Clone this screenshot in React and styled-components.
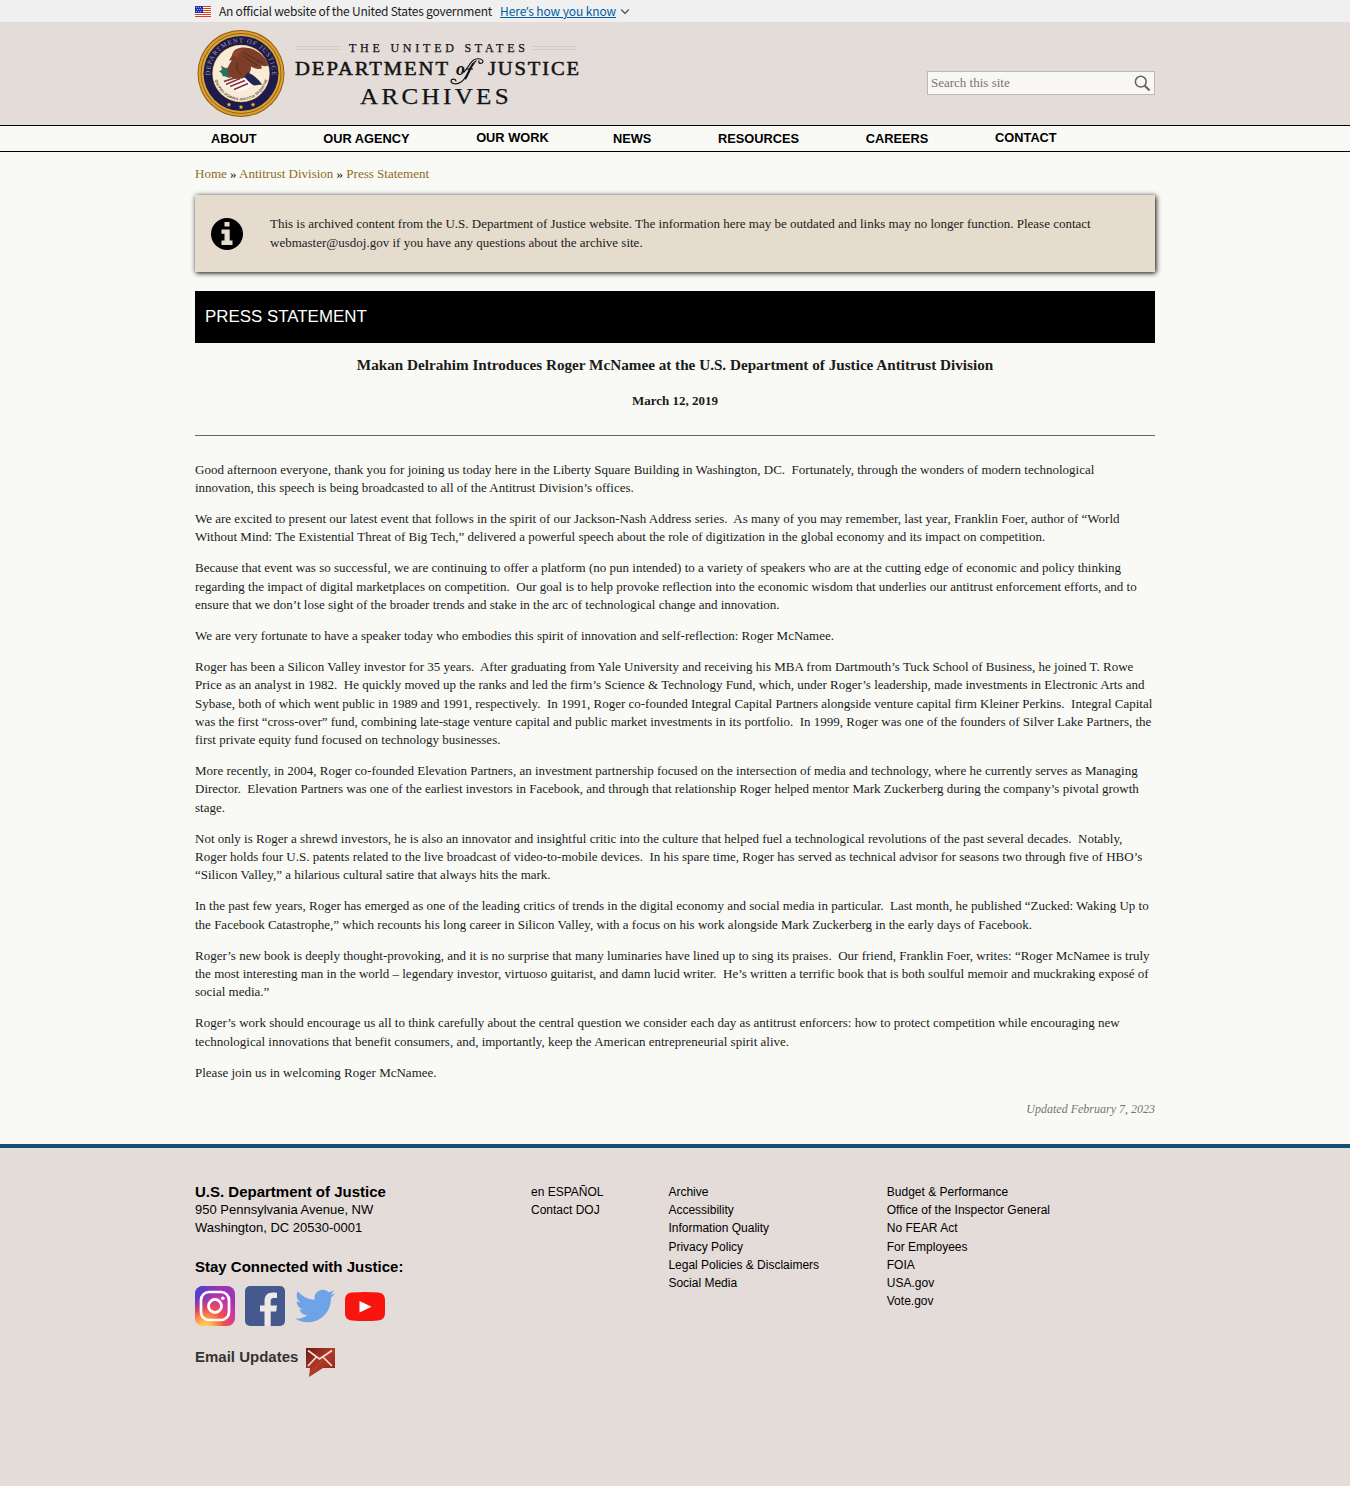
import React from "react";
import styled, { createGlobalStyle } from "styled-components";
import { FaTwitter } from "react-icons/fa";

const sans = `"Liberation Sans", Arial, sans-serif`;
const serif = `"Liberation Serif", "Times New Roman", serif`;

const GlobalStyle = createGlobalStyle`
  *, *::before, *::after { box-sizing: border-box; }
  body {
    margin: 0;
    background: #f9faf5;
    color: #1b1b1b;
    font: 13px/18.2px ${serif};
  }
  a { color: inherit; text-decoration: none; }
  p { margin: 0; }
  svg { flex: none; }
`;

const Container = styled.div`
  width: 960px;
  margin: 0 auto;
`;

const Banner = styled.div`
  height: 22px;
  background: #f0f0f0;
`;

const BannerInner = styled(Container)`
  display: flex;
  align-items: center;
  height: 22px;
  font: 12px/22px "Noto Sans CJK SC", sans-serif;
  letter-spacing: -0.23px;
  color: #1b1b1b;
  white-space: nowrap;

  > svg:first-child { margin-right: 8px; }
`;

const BannerLink = styled.a`
  margin: 0 4px 0 8px;
  color: #005ea2;
  letter-spacing: -0.1px;
  text-decoration: underline;
`;

const Apostrophe = styled.span`
  font-family: "Open Sans", sans-serif;
  line-height: 1;
`;

const Masthead = styled.header`
  height: 103px;
  background: #e3dcd9;
`;

const MastheadInner = styled(Container)`
  display: flex;
  justify-content: space-between;
`;

const SearchBox = styled.div`
  display: flex;
  align-items: center;
  justify-content: space-between;
  width: 228px;
  height: 24px;
  margin-top: 49px;
  padding: 0 3px;
  border: 1px solid #bdb8b4;
  background: #f9f7f4;
  color: #757575;
`;

const Nav = styled.nav`
  height: 27px;
  border-top: 1px solid #000;
  border-bottom: 1px solid #000;
`;

const NavInner = styled(Container)`
  display: flex;
  gap: 66.7px;
  padding-left: 16px;
`;

const NavItem = styled.a`
  margin-right: ${(p) => p.$pull || 0};
  font: bold 12.8px/${(p) => (p.$raised ? "23px" : "25px")} ${sans};
  color: #000;
`;

const Breadcrumb = styled.div`
  padding-top: 13px;
  margin-bottom: 12px;
  color: #000;

  a { color: #8c6a24; }
`;

const Notice = styled.div`
  display: flex;
  align-items: center;
  height: 77px;
  padding: 0 60px 0 16px;
  background: #e5dccd;
  box-shadow: 1px 1px 5px #000;
`;

const NoticeText = styled.p`
  margin: 0 0 2px 27px;
  line-height: 19px;
`;

const SectionBar = styled.h2`
  height: 52px;
  margin: 19px 0 0;
  padding-left: 10px;
  background: #000;
  color: #fff;
  font: 16.9px/51px ${sans};
`;

const Title = styled.h1`
  margin: 12px 0 0;
  font-size: 15.2px;
  line-height: 19.5px;
  text-align: center;
`;

const DateLine = styled.div`
  margin-top: 17.5px;
  padding-bottom: 25px;
  border-bottom: 1px solid #666;
  font-weight: bold;
  text-align: center;
`;

const Article = styled.article`
  padding-top: 24.16px;

  p { margin-bottom: 13px; }
`;

const Updated = styled.div`
  margin-top: 18.1px;
  font-size: 12px;
  font-style: italic;
  color: #757575;
  text-align: right;
`;

const Footer = styled.footer`
  height: 342.4px;
  margin-top: 25.7px;
  padding-top: 35px;
  border-top: 4px solid #164e73;
  background: #e3dcd9;
  font-family: ${sans};
  color: #000;
`;

const FooterInner = styled(Container)`
  display: flex;
`;

const FooterColumn = styled.div`
  width: ${(p) => p.$width};
`;

const FooterLink = styled.a`
  display: block;
  font-size: 12px;
  white-space: nowrap;
`;

const FooterHeading = styled.div`
  font-size: 15px;
  font-weight: bold;
`;

const StayHeading = styled(FooterHeading)`
  margin: 20.6px 0 9.4px;
`;

const SocialRow = styled.div`
  display: flex;
  gap: 10px;
`;

const EmailRow = styled.div`
  display: flex;
  gap: 7px;
  margin-top: 22px;
  color: #333;
  font: bold 15px/18px ${sans};
`;

const stripes = [0, 2, 4, 6, 8, 10];

const Flag = () => (
  <svg width="16" height="11" viewBox="0 0 16 11">
    <rect width="16" height="11" fill="#fff" />
    {stripes.map((y) => <rect key={y} y={y} width="16" height="1" fill="#db3e1f" />)}
    <rect width="8" height="7" fill="#1e33b1" />
    {[1, 3, 5].map((y) => [1, 3, 5].map((x) => (
      <rect key={`${x}-${y}`} x={x + (y === 3 ? 1 : 0)} y={y} width="1" height="1" fill="#a5add8" />
    )))}
  </svg>
);

const Chevron = () => (
  <svg width="10" height="8" viewBox="0 0 10 8" fill="none" stroke="#565c65" strokeWidth="1.4">
    <path d="M1.2 2.5 5 6.5 8.8 2.5" />
  </svg>
);

const Seal = () => (
  <g transform="translate(241 73.5)">
    <defs>
      <path id="sealTop" d="M-30.9 2.5 A31 31 0 1 1 30.9 2.5" />
      <path id="sealInner" d="M-26.2 6 A26.9 26.9 0 0 0 26.2 6" />
    </defs>
    <circle r="43.5" fill="#8d5a14" />
    <circle r="42.6" fill="#dca02b" />
    <circle r="40.4" fill="#946018" />
    <circle r="39.5" fill="#dda536" />
    <circle r="37.5" fill="#1d1a4c" />
    <circle r="28.8" fill="#d0a85f" />
    <circle r="28.2" fill="#f9ecd6" />
    <text fontFamily="Liberation Serif" fontSize="6.6" fill="#a79c9c">
      <textPath href="#sealTop" textLength="101" startOffset="0.5">DEPARTMENT OF JUSTICE</textPath>
    </text>
    <text fontFamily="Liberation Sans" fontWeight="bold" fontSize="3.5" fill="#4a4030">
      <textPath href="#sealInner" textLength="71" startOffset="0.5">QUI PRO DOMINA JUSTITIA SEQUITUR</textPath>
    </text>
    <path d="M-17 11-7 6 7 3 14 8 6 16-4 18Z" fill="#fffaf2" />
    <path d="M-17 8-5 4M-15 11-1 5M-11 13 4 7M-7 16 7 10" stroke="#8b3044" strokeWidth="1.6" fill="none" />
    <path d="M-20-8c3 2 4 3 7 2 3-3 5-1 5 1 2 2 0 4-3 6l1 3c-4 1-5-2-8-1-1-2-1-4-4-5l3-2Z" fill="#2d6f5d" />
    <path d="M-9-18c1-6 6-8 12-8C13-26 24-19 28-8c-3 1-5 1-8 0l1 3c-4 1-8 0-11-2 0 6-3 10-9 12-5 1-9 0-12-2-4-4-3-10 2-16l-3 0Z" fill="#7b3e28" />
    <path d="M-9-18c2-5 7-7 12-6-4 2-6 4-6 8Z" fill="#94492c" />
    <path d="M2-21 22-10M3-17 17-8M-3-11C-6-5-3-1 1 1" stroke="#57291c" strokeWidth="1" fill="none" />
    <path d="M7-1C12 1 18 6 21 11l-8 1C9 10 6 6 3 3Z" fill="#242550" />
    {[-12, 0, 12].map((x) => (
      <path key={x} transform={`translate(${x} ${x ? 31 : 33.5})`} d="m0-2.3.7 1.6h1.7L1 .6l.5 1.7L0 1.3l-1.5 1 .5-1.7L-2.4-.7h1.7Z" fill="#f0b536" />
    ))}
  </g>
);

const Logo = () => (
  <svg width="390" height="100" viewBox="195 22 390 100">
    <Seal />
    <path d="M296 46.5h45M296 49.5h45M532 46.5h44M532 49.5h44" stroke="#cfc8c5" />
    <g fontFamily="Liberation Serif" fill="#121212">
      <text x="349" y="52" fontSize="12" stroke="#121212" strokeWidth=".25" textLength="176">THE UNITED STATES</text>
      <text x="295" y="75" fontSize="19.5" stroke="#121212" strokeWidth=".5" letterSpacing="1.8" textLength="155" lengthAdjust="spacingAndGlyphs">DEPARTMENT</text>
      <text x="488" y="75" fontSize="19.5" stroke="#121212" strokeWidth=".5" letterSpacing="1.8" textLength="93" lengthAdjust="spacingAndGlyphs">JUSTICE</text>
      <text x="456" y="75" fontSize="18" fontWeight="bold" fontStyle="italic">o</text>
      <text x="360" y="104" fontSize="24" letterSpacing="3.2" stroke="#121212" strokeWidth=".25" textLength="152" lengthAdjust="spacingAndGlyphs">ARCHIVES</text>
    </g>
    <path d="M476 61c-6 4-8 17-15 21-4 3-10 2-10-1 0-2 4-3 5 0M464 72c5-4 6-12 12-13 5-1 9 2 6 4-2 1-4 0-3-2" stroke="#121212" strokeWidth="1.2" fill="none" strokeLinecap="round" />
    <path d="M474 63c-4 4-6 12-9 16" stroke="#121212" strokeWidth="2.2" fill="none" />
    <path d="M466 69h7" stroke="#121212" strokeWidth="1.1" />
  </svg>
);

const SearchIcon = () => (
  <svg width="17" height="17" viewBox="0 0 17 17" fill="none" stroke="#65635f">
    <circle cx="6.8" cy="6.7" r="5.4" strokeWidth="1.5" />
    <path d="m10.8 10.8 4.8 4.7" strokeWidth="2.1" />
  </svg>
);

const InfoIcon = () => (
  <svg width="32" height="32" viewBox="0 0 32 32">
    <circle cx="16" cy="16" r="16" fill="#000" />
    <path d="M13.5 4h5v4.5h-5ZM10.5 11.5h8.2v11h2.8V27h-11v-4.5h3v-6.8h-3Z" fill="#e5dccd" />
  </svg>
);

const Instagram = () => (
  <svg width="40" height="40" viewBox="0 0 40 40">
    <defs>
      <radialGradient id="instaWarm" cx="25%" cy="105%" r="100%">
        <stop offset="0" stopColor="#ffd55a" /><stop offset=".15" stopColor="#ffc052" />
        <stop offset=".48" stopColor="#f55045" /><stop offset=".78" stopColor="#c937a4" />
        <stop offset="1" stopColor="#9b35b5" />
      </radialGradient>
      <radialGradient id="instaCool" cx="-10%" cy="0%" r="75%">
        <stop offset="0" stopColor="#3a55d8" /><stop offset=".4" stopColor="#5c3dcb" />
        <stop offset="1" stopColor="#7638c0" stopOpacity="0" />
      </radialGradient>
    </defs>
    <rect width="40" height="40" rx="8" fill="url(#instaWarm)" />
    <rect width="40" height="40" rx="8" fill="url(#instaCool)" />
    <rect x="6" y="6" width="28" height="28" rx="8" fill="none" stroke="#fff" strokeWidth="2.7" />
    <circle cx="20" cy="20" r="6.5" fill="none" stroke="#fff" strokeWidth="2.8" />
    <circle cx="27.8" cy="12.2" r="1.8" fill="#fff" />
  </svg>
);

const Facebook = () => (
  <svg width="40" height="40" viewBox="0 0 40 40">
    <rect width="40" height="40" rx="5" fill="#46598f" />
    <path d="M19.5 40V25.5H15v-6h4.5v-4c0-6 3-9 8-9 2 0 3.5.2 4.5.3v5.3h-3c-2.5 0-3.3 1.2-3.3 3.2v4.2H32l-.8 6h-5.5V40Z" fill="#eee9e7" />
  </svg>
);

const Youtube = () => (
  <svg width="40" height="40" viewBox="0 0 40 40">
    <path d="M7 6.5C15 5.7 25 5.7 33 6.5c5 .4 7 3 7 8v12c0 5-2 7.5-7 7.9-8 .7-18 .7-26 0-5-.4-7-2.9-7-7.9v-12c0-5 2-7.6 7-8Z" fill="#f7150d" />
    <path d="m14.5 15 12 5.7-12 5.7Z" fill="#fff" />
  </svg>
);

const EmailIcon = () => (
  <svg width="30" height="30" viewBox="0 0 30 30">
    <defs>
      <linearGradient id="mail" x1="0" y1="0" x2="1" y2="1">
        <stop stopColor="#701712" /><stop offset=".5" stopColor="#b23a29" /><stop offset="1" stopColor="#801e17" />
      </linearGradient>
    </defs>
    <path d="M1 0h29v20H18L4 29l1-9H1Z" fill="url(#mail)" />
    <path d="M3 2.5 14.5 11 27 2.5M3 18l8-8.5M27 18l-8.5-8.5" fill="none" stroke="#f5e2d7" strokeWidth="1.6" />
  </svg>
);

const navItems = [
  { label: "ABOUT" },
  { label: "OUR AGENCY" },
  { label: "OUR WORK", raised: true, pull: "-2.4px" },
  { label: "NEWS" },
  { label: "RESOURCES" },
  { label: "CAREERS" },
  { label: "CONTACT", raised: true },
];

const paragraphs = [
  "Good afternoon everyone, thank you for joining us today here in the Liberty Square Building in Washington, DC.\u00a0 Fortunately, through the wonders of modern technological innovation, this speech is being broadcasted to all of the Antitrust Division’s offices.",
  "We are excited to present our latest event that follows in the spirit of our Jackson-Nash Address series.\u00a0 As many of you may remember, last year, Franklin Foer, author of “World Without Mind: The Existential Threat of Big Tech,” delivered a powerful speech about the role of digitization in the global economy and its impact on competition.",
  "Because that event was so successful, we are continuing to offer a platform (no pun intended) to a variety of speakers who are at the cutting edge of economic and policy thinking regarding the impact of digital marketplaces on competition.\u00a0 Our goal is to help provoke reflection into the economic wisdom that underlies our antitrust enforcement efforts, and to ensure that we don’t lose sight of the broader trends and stake in the arc of technological change and innovation.",
  "We are very fortunate to have a speaker today who embodies this spirit of innovation and self-reflection: Roger McNamee.",
  "Roger has been a Silicon Valley investor for 35 years.\u00a0 After graduating from Yale University and receiving his MBA from Dartmouth’s Tuck School of Business, he joined T. Rowe Price as an analyst in 1982.\u00a0 He quickly moved up the ranks and led the firm’s Science & Technology Fund, which, under Roger’s leadership, made investments in Electronic Arts and Sybase, both of which went public in 1989 and 1991, respectively.\u00a0 In 1991, Roger co-founded Integral Capital Partners alongside venture capital firm Kleiner Perkins.\u00a0 Integral Capital was the first “cross-over” fund, combining late-stage venture capital and public market investments in its portfolio.\u00a0 In 1999, Roger was one of the founders of Silver Lake Partners, the first private equity fund focused on technology businesses.",
  "More recently, in 2004, Roger co-founded Elevation Partners, an investment partnership focused on the intersection of media and technology, where he currently serves as Managing Director.\u00a0 Elevation Partners was one of the earliest investors in Facebook, and through that relationship Roger helped mentor Mark Zuckerberg during the company’s pivotal growth stage.",
  "Not only is Roger a shrewd investors, he is also an innovator and insightful critic into the culture that helped fuel a technological revolutions of the past several decades.\u00a0 Notably, Roger holds four U.S. patents related to the live broadcast of video-to-mobile devices.\u00a0 In his spare time, Roger has served as technical advisor for seasons two through five of HBO’s “Silicon Valley,” a hilarious cultural satire that always hits the mark.",
  "In the past few years, Roger has emerged as one of the leading critics of trends in the digital economy and social media in particular.\u00a0 Last month, he published “Zucked: Waking Up to the Facebook Catastrophe,” which recounts his long career in Silicon Valley, with a focus on his work alongside Mark Zuckerberg in the early days of Facebook.",
  "Roger’s new book is deeply thought-provoking, and it is no surprise that many luminaries have lined up to sing its praises.\u00a0 Our friend, Franklin Foer, writes: “Roger McNamee is truly the most interesting man in the world – legendary investor, virtuoso guitarist, and damn lucid writer.\u00a0 He’s written a terrific book that is both soulful memoir and muckraking exposé of social media.”",
  "Roger’s work should encourage us all to think carefully about the central question we consider each day as antitrust enforcers: how to protect competition while encouraging new technological innovations that benefit consumers, and, importantly, keep the American entrepreneurial spirit alive.",
  "Please join us in welcoming Roger McNamee.",
];

const footerLinks = [
  { width: "137.4px", links: ["en ESPAÑOL", "Contact DOJ"] },
  { width: "218.4px", links: ["Archive", "Accessibility", "Information Quality", "Privacy Policy", "Legal Policies & Disclaimers", "Social Media"] },
  { width: "200px", links: ["Budget & Performance", "Office of the Inspector General", "No FEAR Act", "For Employees", "FOIA", "USA.gov", "Vote.gov"] },
];

export default function App() {
  return (
    <>
      <GlobalStyle />
      <Banner>
        <BannerInner>
          <Flag />
          <span>An official website of the United States government</span>
          <BannerLink href="#">Here<Apostrophe>’</Apostrophe>s how you know</BannerLink>
          <Chevron />
        </BannerInner>
      </Banner>
      <Masthead>
        <MastheadInner>
          <Logo />
          <SearchBox><span>Search this site</span><SearchIcon /></SearchBox>
        </MastheadInner>
      </Masthead>
      <Nav>
        <NavInner>
          {navItems.map((item) => (
            <NavItem key={item.label} href="#" $raised={item.raised} $pull={item.pull}>{item.label}</NavItem>
          ))}
        </NavInner>
      </Nav>
      <Container as="main">
        <Breadcrumb>
          <a href="#">Home</a> » <a href="#">Antitrust Division</a> » <a href="#">Press Statement</a>
        </Breadcrumb>
        <Notice>
          <InfoIcon />
          <NoticeText>
            This is archived content from the U.S. Department of Justice website. The information here may be outdated and links may no longer function. Please contact webmaster@usdoj.gov if you have any questions about the archive site.
          </NoticeText>
        </Notice>
        <SectionBar>PRESS STATEMENT</SectionBar>
        <Title>Makan Delrahim Introduces Roger McNamee at the U.S. Department of Justice Antitrust Division</Title>
        <DateLine>March 12, 2019</DateLine>
        <Article>
          {paragraphs.map((text) => <p key={text}>{text}</p>)}
        </Article>
        <Updated>Updated February 7, 2023</Updated>
      </Container>
      <Footer>
        <FooterInner>
          <FooterColumn $width="336px">
            <FooterHeading>U.S. Department of Justice</FooterHeading>
            <div>950 Pennsylvania Avenue, NW</div>
            <div>Washington, DC 20530-0001</div>
            <StayHeading>Stay Connected with Justice:</StayHeading>
            <SocialRow>
              <Instagram />
              <Facebook />
              <FaTwitter size={40} color="#6fa3e8" />
              <Youtube />
            </SocialRow>
            <EmailRow><span>Email Updates</span><EmailIcon /></EmailRow>
          </FooterColumn>
          {footerLinks.map((column) => (
            <FooterColumn key={column.width} $width={column.width}>
              {column.links.map((link) => <FooterLink key={link} href="#">{link}</FooterLink>)}
            </FooterColumn>
          ))}
        </FooterInner>
      </Footer>
    </>
  );
}
